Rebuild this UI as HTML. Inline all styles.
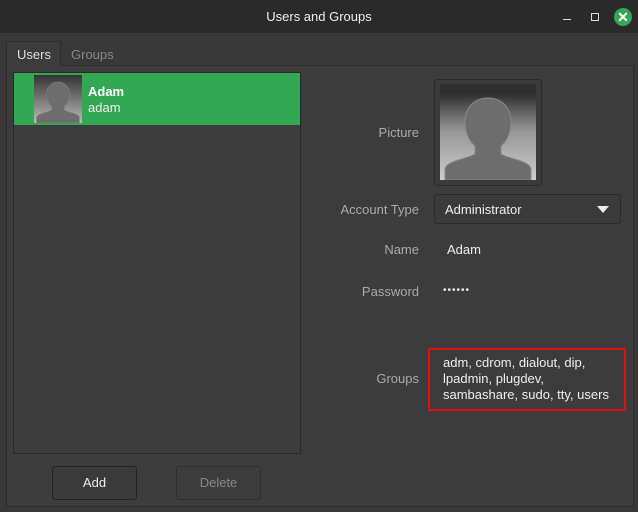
<!DOCTYPE html>
<html><head><style>
*{margin:0;padding:0;box-sizing:border-box}
body{width:638px;height:512px;background:#383838;font-family:"Liberation Sans",sans-serif;font-size:13px;color:#ddd;position:relative;overflow:hidden}
.a{position:absolute}
.lbl{position:absolute;text-align:right;width:120px;left:299px;color:#aaa}
</style></head><body>
<div class="a" style="left:0;top:0;width:638px;height:33px;background:#2a2a2a"></div>
<div class="a" style="left:0;top:9px;width:638px;text-align:center;color:#eee">Users and Groups</div>
<div class="a" style="left:563px;top:19px;width:8px;height:1px;background:#ddd"></div>
<div class="a" style="left:591px;top:13px;width:8px;height:8px;border:1px solid #ddd"></div>
<div class="a" style="left:614px;top:8px;width:18px;height:18px;border-radius:50%;background:#35a654;color:#fff;font-weight:bold;font-size:14px;line-height:18px;text-align:center">✕</div>

<div class="a" style="left:6px;top:65px;width:628px;height:442px;background:#3c3c3c;border:1px solid #2c2c2c"></div>
<div class="a" style="left:6px;top:41px;width:55px;height:25px;background:#3c3c3c;border:1px solid #2c2c2c;border-bottom:none"></div>
<div class="a" style="left:17px;top:47px;color:#ddd">Users</div>
<div class="a" style="left:71px;top:47px;color:#888">Groups</div>

<div class="a" style="left:13px;top:72px;width:288px;height:382px;background:#3c3c3c;border:1px solid #2a2a2a"></div>
<div class="a" style="left:14px;top:73px;width:286px;height:52px;background:#32a852"></div>
<div class="a" style="left:34px;top:75px;width:48px;height:48px;background:linear-gradient(#333,#bbb);overflow:hidden">
<svg width="48" height="48" viewBox="0 0 96 96"><path d="M48 14c14 0 23 10 23 24 0 12-5 20-10 24v8c8 5 26 6 30 14v12H5V84c4-8 22-9 30-14v-8c-5-4-10-12-10-24 0-14 9-24 23-24z" fill="#6d6d6d" stroke="#888" stroke-width="1"/></svg></div>
<div class="a" style="left:88px;top:84px;font-weight:bold;color:#fff">Adam</div>
<div class="a" style="left:88px;top:100px;color:#eee">adam</div>

<div class="a" style="left:52px;top:466px;width:85px;height:34px;border:1px solid #222;border-radius:3px;background:#3a3a3a;text-align:center;line-height:32px;color:#eee">Add</div>
<div class="a" style="left:176px;top:466px;width:85px;height:34px;border:1px solid #2e2e2e;border-radius:3px;background:#3c3c3c;text-align:center;line-height:32px;color:#888">Delete</div>

<div class="lbl" style="top:125px">Picture</div>
<div class="a" style="left:434px;top:79px;width:108px;height:107px;border:1px solid #2a2a2a;border-radius:3px;background:#3a3a3a"></div>
<div class="a" style="left:440px;top:84px;width:96px;height:96px;background:linear-gradient(#2e2e2e 10%,#999 50%,#ccc);overflow:hidden">
<svg width="96" height="96" viewBox="0 0 96 96"><path d="M48 14c14 0 23 10 23 24 0 12-5 20-10 24v8c8 5 26 6 30 14v12H5V84c4-8 22-9 30-14v-8c-5-4-10-12-10-24 0-14 9-24 23-24z" fill="#6d6d6d" stroke="#888" stroke-width="1"/></svg></div>

<div class="lbl" style="top:202px">Account Type</div>
<div class="a" style="left:434px;top:194px;width:187px;height:30px;border:1px solid #2a2a2a;border-radius:3px;background:#3a3a3a"></div>
<div class="a" style="left:445px;top:202px;color:#eee">Administrator</div>
<div class="a" style="left:597px;top:206px;width:0;height:0;border-left:6px solid transparent;border-right:6px solid transparent;border-top:7px solid #eee"></div>

<div class="lbl" style="top:242px">Name</div>
<div class="a" style="left:447px;top:242px;color:#eee">Adam</div>
<div class="lbl" style="top:284px">Password</div>
<div class="a" style="left:443px;top:285px;color:#eee;font-size:10px;letter-spacing:1px">••••••</div>

<div class="lbl" style="top:371px">Groups</div>
<div class="a" style="left:428px;top:348px;width:198px;height:63px;border:2px solid #e01010"></div>
<div class="a" style="left:443px;top:355px;line-height:16px;color:#eee">adm, cdrom, dialout, dip,<br>lpadmin, plugdev,<br>sambashare, sudo, tty, users</div>
</body></html>
